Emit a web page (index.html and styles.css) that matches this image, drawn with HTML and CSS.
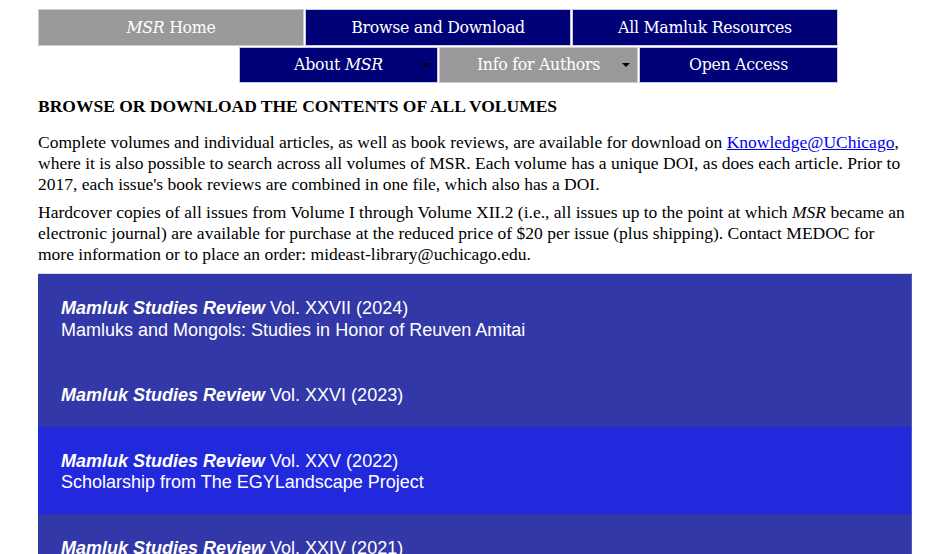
FILE: index.html
```html
<!DOCTYPE html>
<html lang="en">
<head>
  <meta charset="UTF-8">
  <meta name="viewport" content="width=device-width, initial-scale=1.0">
  <title>Mamluk Studies Review - Browse and Download</title>
  <link rel="stylesheet" href="styles.css">
</head>
<body>
  <main class="page">
    <nav class="menu">
      <ul class="menu-row top">
        <li class="current"><a href="#"><i>MSR</i> Home</a></li>
        <li><a href="#">Browse and Download</a></li>
        <li><a href="#">All Mamluk Resources</a></li>
      </ul>
      <ul class="menu-row bottom">
        <li class="drop"><a href="#">About <i>MSR</i></a><span class="arrow"></span></li>
        <li class="drop current"><a href="#">Info for Authors</a><span class="arrow"></span></li>
        <li><a href="#">Open Access</a></li>
      </ul>
    </nav>

    <h2>BROWSE OR DOWNLOAD THE CONTENTS OF ALL VOLUMES</h2>
    <p>Complete volumes and individual articles, as well as book reviews, are available for download on <a href="#">Knowledge@UChicago</a>, where it is also possible to search across all volumes of MSR. Each volume has a unique DOI, as does each article. Prior to 2017, each issue's book reviews are combined in one file, which also has a DOI.</p>
    <p>Hardcover copies of all issues from Volume I through Volume XII.2 (i.e., all issues up to the point at which <i>MSR</i> became an electronic journal) are available for purchase at the reduced price of $20 per issue (plus shipping). Contact MEDOC for more information or to place an order: mideast-library@uchicago.edu.</p>

    <ul class="volumes">
      <li><a href="#"><b><i>Mamluk Studies Review</i></b> Vol. XXVII (2024)<br>Mamluks and Mongols: Studies in Honor of Reuven Amitai</a></li>
      <li><a href="#"><b><i>Mamluk Studies Review</i></b> Vol. XXVI (2023)</a></li>
      <li class="hover"><a href="#"><b><i>Mamluk Studies Review</i></b> Vol. XXV (2022)<br>Scholarship from The EGYLandscape Project</a></li>
      <li><a href="#"><b><i>Mamluk Studies Review</i></b> Vol. XXIV (2021)</a></li>
      <li><a href="#"><b><i>Mamluk Studies Review</i></b> Vol. XXIII (2020)</a></li>
    </ul>
  </main>
</body>
</html>
```

FILE: styles.css
```css
body {
  margin: 0;
  font-family: "Liberation Serif", "Times New Roman", serif;
  font-size: 17.5px;
  color: #000;
  background: #fff;
}

.page {
  width: 874px;
  margin-left: 38px;
  padding-top: 9px;
}

.menu {
  width: 800px;

  .menu-row {
    display: flex;
    justify-content: flex-end;
    gap: 1px;
    list-style: none;
    margin: 0 0 1px;
    padding: 0;
  }

  li {
    position: relative;
    display: flex;
    align-items: center;
    justify-content: center;
    background: #000077;
    border: 1px solid #c8c8e0;
    box-sizing: border-box;
  }

  .top li {
    flex: 1;
    height: 37px;
    padding-bottom: 1px;
  }

  .bottom li {
    width: 199px;
    height: 36px;
    padding-bottom: 2px;
  }

  .current {
    background: #999;
    border-color: #ccc;
  }

  a {
    color: #fff;
    text-decoration: none;
    font-family: "DejaVu Serif", Georgia, serif;
    font-size: 15.8px;
    letter-spacing: -0.3px;
  }

  .arrow {
    position: absolute;
    right: 7px;
    top: 15px;
    border-left: 4px solid transparent;
    border-right: 4px solid transparent;
    border-top: 4px solid #000;
  }
}

h2 {
  font-size: 17.5px;
  line-height: 18px;
  margin: 14px 0 17px;
}

p {
  line-height: 21px;
  margin: 0 0 7px;

  a {
    color: #0000ee;
  }
}

.volumes {
  list-style: none;
  margin: 8px 0 0;
  padding: 0;
  border-top: 1px solid #d8d8f0;
  border-right: 1px solid #5058c0;

  li {
    background: #3338a8;
  }

  li.hover {
    background: #2229dd;
  }

  a {
    display: block;
    padding: 24px 23px 20px;
    color: #fff;
    text-decoration: none;
    font-family: "Liberation Sans", Arial, sans-serif;
    font-size: 18px;
    line-height: 21.5px;
  }
}
```
